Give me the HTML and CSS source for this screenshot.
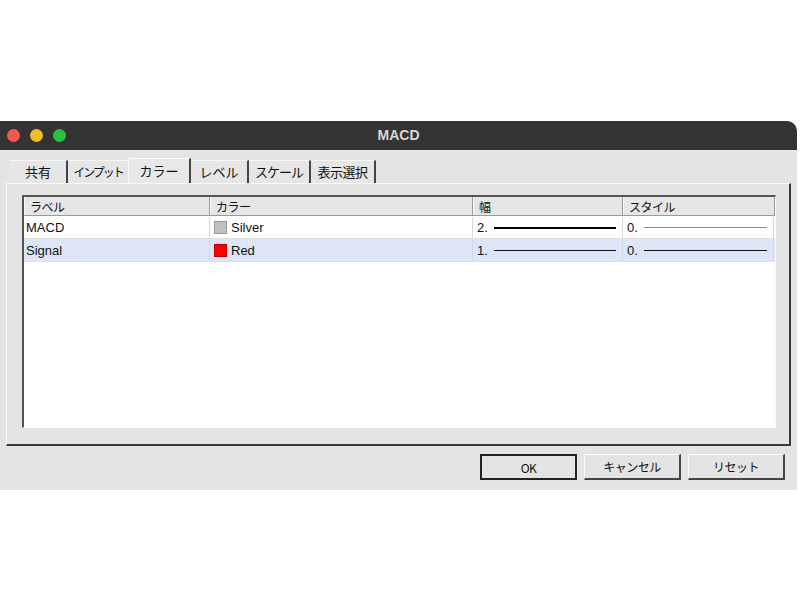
FILE: index.html
```html
<!DOCTYPE html>
<html lang="ja">
<head>
<meta charset="utf-8">
<link rel="stylesheet" href="styles.css">
</head>
<body>
<div class="page">
  <div class="window">
    <div class="titlebar">
      <div class="lights">
        <span class="light red"></span>
        <span class="light yellow"></span>
        <span class="light green"></span>
      </div>
      <div class="title">MACD</div>
    </div>
    <div class="content">
      <div class="tabs">
        <div class="tab t1">共有</div>
        <div class="tab t2">インプット</div>
        <div class="tab t3 active">カラー</div>
        <div class="tab t4">レベル</div>
        <div class="tab t5">スケール</div>
        <div class="tab t6">表示選択</div>
      </div>
      <div class="panel">
        <div class="table">
          <div class="row head">
            <div class="cell c1">ラベル</div>
            <div class="cell c2">カラー</div>
            <div class="cell c3">幅</div>
            <div class="cell c4">スタイル</div>
          </div>
          <div class="row r1">
            <div class="cell c1">MACD</div>
            <div class="cell c2"><span class="swatch silver"></span>Silver</div>
            <div class="cell c3"><span class="num">2.</span><span class="line thick"></span></div>
            <div class="cell c4"><span class="num">0.</span><span class="line grey"></span></div>
          </div>
          <div class="row r2">
            <div class="cell c1">Signal</div>
            <div class="cell c2"><span class="swatch red"></span>Red</div>
            <div class="cell c3"><span class="num">1.</span><span class="line thin"></span></div>
            <div class="cell c4"><span class="num">0.</span><span class="line thin"></span></div>
          </div>
        </div>
      </div>
      <div class="buttons">
        <div class="btn default">OK</div>
        <div class="btn">キャンセル</div>
        <div class="btn">リセット</div>
      </div>
    </div>
  </div>
</div>
</body>
</html>
```

FILE: styles.css
```css
html, body {
  margin: 0;
  padding: 0;
  background: #ffffff;
}
.page {
  width: 800px;
  height: 600px;
  padding-top: 121px;
  box-sizing: border-box;
  font-family: "Liberation Sans", "Noto Sans CJK JP", sans-serif;
  font-size: 13px;
  color: #111;
}
.window {
  width: 797px;
  height: 369px;
  display: flex;
  flex-direction: column;
  background: #e4e4e4;
  border-top-right-radius: 10px;
  overflow: hidden;
}
.titlebar {
  height: 29px;
  background: #333333;
  display: flex;
  align-items: center;
  position: relative;
  flex-shrink: 0;
}
.lights {
  display: flex;
  gap: 10px;
  padding-left: 7px;
}
.light {
  width: 13px;
  height: 13px;
  border-radius: 50%;
  display: block;
}
.light.red { background: #f25a52; }
.light.yellow { background: #f6bb2b; }
.light.green { background: #2cc23f; }
.title {
  position: absolute;
  left: 0;
  right: 0;
  top: 0;
  line-height: 29px;
  text-align: center;
  color: #d8d8d8;
  font-weight: bold;
  font-size: 14px;
}
.content {
  flex: 1;
  display: flex;
  flex-direction: column;
  padding: 8px 6px 0 6px;
}
.tabs {
  display: flex;
  height: 25px;
  padding-left: 4px;
  font-family: "Noto Sans CJK JP", sans-serif;
  font-size: 13px;
}
.tab {
  box-sizing: border-box;
  text-align: center;
  white-space: nowrap;
  background: #e6e6e6;
  border-top: 1px solid #f7f7f7;
  border-right: 2px solid #444;
  color: #111;
  margin-top: 2px;
  height: 23px;
  line-height: 22px;
}
.tab.t1 { width: 58px; }
.tab.t2 { width: 60px; border-right: none; letter-spacing: -2px; font-size: 12px; }
.tab.t3 { width: 63px; }
.tab.t4 { width: 58px; }
.tab.t5 { width: 62px; letter-spacing: -1px; }
.tab.t6 { width: 65px; letter-spacing: -0.5px; }
.tab.active {
  margin-top: 0;
  height: 25px;
  line-height: 24px;
  background: #e8e8e8;
  border-top: 1px solid #fafafa;
  border-left: 1px solid #fafafa;
}
.panel {
  height: 263px;
  box-sizing: border-box;
  border-top: 1px solid #fafafa;
  border-left: 1px solid #fafafa;
  border-right: 2px solid #3a3a3a;
  border-bottom: 2px solid #3a3a3a;
  padding: 11px 13px 16px 15px;
  display: flex;
}
.table {
  flex: 1;
  background: #ffffff;
  border-top: 2px solid #555;
  border-left: 2px solid #555;
  border-right: 1px solid #fafafa;
  border-bottom: 1px solid #fafafa;
  display: flex;
  flex-direction: column;
}
.row {
  display: flex;
  height: 22px;
  padding-top: 1px;
  box-sizing: content-box;
  border-bottom: 1px solid #e0e0e0;
}
.row.head {
  height: 18px;
  padding-top: 0;
  background: #e6e6e6;
  border-bottom: 1px solid #9a9a9a;
  font-family: "Noto Sans CJK JP", sans-serif;
  font-size: 12px;
  letter-spacing: -0.5px;
}
.row.r1 { height: 21px; }
.row.r2 { background: #dde5f7; height: 21px; }
.cell {
  box-sizing: border-box;
  display: flex;
  align-items: center;
  padding-left: 2px;
  border-right: 1px solid #d8d8d8;
  white-space: nowrap;
}
.row.head .cell {
  border-right: 1px solid #9a9a9a;
  border-left: 1px solid #fafafa;
  padding-left: 5px;
}
.c1 { width: 186px; }
.c2 { width: 263px; padding-left: 4px; }
.c3 { width: 150px; padding-left: 4px; }
.c4 { width: 151px; padding-left: 4px; }
.row.head .c4 { width: 152px; }
.swatch {
  width: 13px;
  height: 13px;
  box-sizing: border-box;
  display: inline-block;
  margin-right: 4px;
}
.swatch.silver { background: #c0c0c0; border: 1px solid #999; }
.swatch.red { background: #ff0000; border: 1px solid #b00; }
.num { width: 17px; flex-shrink: 0; }
.line {
  display: block;
  flex: 1;
  margin-right: 6px;
}
.line.thick { height: 2px; background: #000; }
.line.thin { height: 1px; background: #111; }
.line.grey { height: 1px; background: #888; }
.buttons {
  display: flex;
  justify-content: flex-end;
  gap: 7px;
  padding: 8px 6px 0 0;
  font-family: "Noto Sans CJK JP", sans-serif;
  font-size: 12px;
  letter-spacing: -0.5px;
}
.btn {
  width: 97px;
  height: 26px;
  box-sizing: border-box;
  line-height: 24px;
  text-align: center;
  background: #e4e4e4;
  border-top: 1px solid #fafafa;
  border-left: 1px solid #fafafa;
  border-right: 2px solid #444;
  border-bottom: 2px solid #444;
}
.btn.default {
  border: 2px solid #222;
}
```
